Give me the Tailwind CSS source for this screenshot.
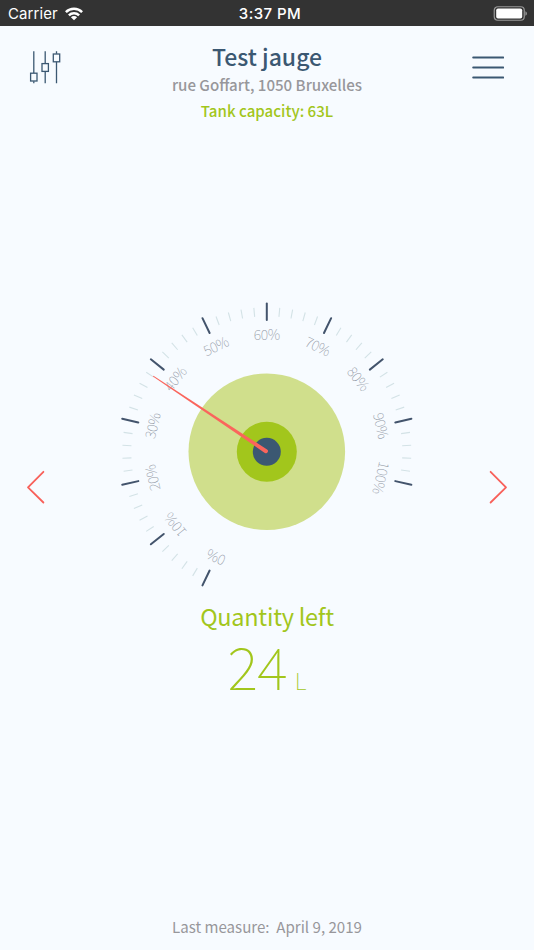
<!DOCTYPE html>
<html lang="en">
<head>
  <meta charset="UTF-8" />
  <meta name="viewport" content="width=device-width, initial-scale=1.0" />
  <title>Test jauge</title>
  <script src="https://cdn.jsdelivr.net/npm/@tailwindcss/browser@4"></script>
</head>
<body class="bg-[#f7fbff] font-['Noto_Sans_CJK_SC',sans-serif] h-[950px] flex flex-col overflow-hidden">

  <!-- Status bar -->
  <div class="h-[26px] shrink-0 bg-[#333333] text-white grid grid-cols-[1fr_auto_1fr] items-center pl-2 pr-[7px] font-['Inter',sans-serif] text-[15px] leading-[26px]">
    <div class="flex items-center gap-[7px]">
      <span class="tracking-[0.1px] pt-px">Carrier</span>
      <svg class="w-[18px] h-[14px]" viewBox="0 0 18 14" fill="none" stroke="#fff" stroke-width="2.5">
        <path d="M0.9 5.1a11.6 11.6 0 0 1 16.2 0" />
        <path d="M3.9 8.3a7.3 7.3 0 0 1 10.2 0" />
        <path d="M9 13.3 5.9 10.2a4.4 4.4 0 0 1 6.2 0z" fill="#fff" stroke="none" />
      </svg>
    </div>
    <span class="font-medium tracking-[0.45px] pt-px pl-[5px] whitespace-nowrap">3:37 PM</span>
    <svg class="w-[34px] h-[15px] justify-self-end" viewBox="0 0 34 15">
      <rect x="1.25" y="0.75" width="30" height="13.5" rx="3.5" fill="none" stroke="#999" stroke-width="1.2" />
      <rect x="3.2" y="2.5" width="26" height="10" rx="1.8" fill="#fff" />
      <path d="M32.4 5.2v4.6c1.2-.5 1.5-1.4 1.5-2.3s-.3-1.8-1.5-2.3z" fill="#999" />
    </svg>
  </div>

  <!-- Header -->
  <header class="flex justify-between items-start pl-[29px] pr-[30px] h-[104px] shrink-0">
    <svg class="w-8 h-[34px] mt-[25px]" viewBox="0 0 32 34" fill="none" stroke="#3b5872" stroke-width="1.3">
      <path d="M4.8 0.3V22M4.8 30.3V32.3M16.2 0.3V12.5M16.2 20.5V32.3M27.5 0.3V2.8M27.5 10.8V32.3" />
      <rect x="1.6" y="22.2" width="6.4" height="7.8" />
      <rect x="13" y="12.6" width="6.4" height="7.8" />
      <rect x="24.3" y="3" width="6.4" height="7.8" />
    </svg>
    <div class="text-center pt-[13px] pl-px">
      <h1 class="text-[#3b5872] text-[23px] leading-[34px] font-medium">Test jauge</h1>
      <p class="text-[#97979b] text-[15.1px] leading-[22px] font-medium">rue Goffart, 1050 Bruxelles</p>
      <p class="text-[#a2c61c] text-[15.1px] leading-[22px] font-medium mt-1">Tank capacity: 63L</p>
    </div>
    <svg class="w-8 h-6 mt-[29px]" viewBox="0 0 32 24" stroke="#3b5872" stroke-width="2" stroke-linecap="round">
      <path d="M1.2 2.5H31.2M1.2 12.5H31.2M1.2 22.5H31.2" />
    </svg>
  </header>

  <!-- Gauge -->
  <main class="flex flex-col items-center pt-[162px] grow">
    <div class="flex w-full justify-between items-center px-[26px]">
      <svg class="w-5 h-9 mt-[86px]" viewBox="0 0 20 36" fill="none" stroke="#f8605a" stroke-width="1.8" stroke-linecap="round" stroke-linejoin="round">
        <path d="M17.4 2.8 2 18.3l15.4 15.2" />
      </svg>
      <svg class="w-[320px] h-[304px]" viewBox="0 0 320 304">
        <g transform="translate(159.8 159.8)">
          <circle r="78.3" fill="#d0df8c" />
          <circle r="30" fill="#a2c61c" />
          <circle r="14" fill="#3b5872" />
          <g id="ticks"></g>
        </g>
      </svg>
      <svg class="w-5 h-9 mt-[86px]" viewBox="0 0 20 36" fill="none" stroke="#f8605a" stroke-width="1.8" stroke-linecap="round" stroke-linejoin="round">
        <path d="M2.6 2.8 18 18.3 2.6 33.5" />
      </svg>
    </div>

    <h2 class="text-[#a2c61c] text-[23.5px] leading-[34px] mt-[3px] tracking-[-0.27px]">Quantity left</h2>
    <p class="text-[#a2c61c] font-thin leading-[64px] whitespace-nowrap">
      <span class="text-[58.5px] tracking-[-0.8px]">24</span><span class="text-[23px] ml-2">L</span>
    </p>
  </main>

  <footer class="text-center text-[#97979b] text-[15.1px] leading-[22px] pb-[13px] whitespace-pre">Last measure:  April 9, 2019</footer>

  <script>
    const capacity = 63;
    const quantity = 24;
    const step = 360 / 70;
    const start = -6 * 5 * step;

    // 0% - 100%, one long tick every 10%
    let html = '';
    for (let i = 0; i <= 50; i++) {
      const angle = start + i * step;
      if (i % 5 === 0) {
        html += `<g transform="rotate(${angle})">
          <line y1="-148.3" y2="-131.8" stroke="#43546c" stroke-width="2" stroke-linecap="round" />
          <text y="-111.9" text-anchor="middle" font-size="14.1" letter-spacing="-0.4" font-weight="100" fill="#8f96a3">${i * 2}%</text>
        </g>`;
      } else {
        html += `<line transform="rotate(${angle})" y1="-144.5" y2="-135.5" stroke="#d3e2e6" stroke-width="1.1" />`;
      }
    }

    // Needle
    const needle = start + (quantity / capacity) * 50 * step;
    html += `<path transform="rotate(${needle})" d="M-0.5 -136.5H0.5L2 -1Q2 1 0 1T-2 -1Z" fill="#fa655c" />`;
    document.getElementById('ticks').innerHTML = html;
  </script>
</body>
</html>
